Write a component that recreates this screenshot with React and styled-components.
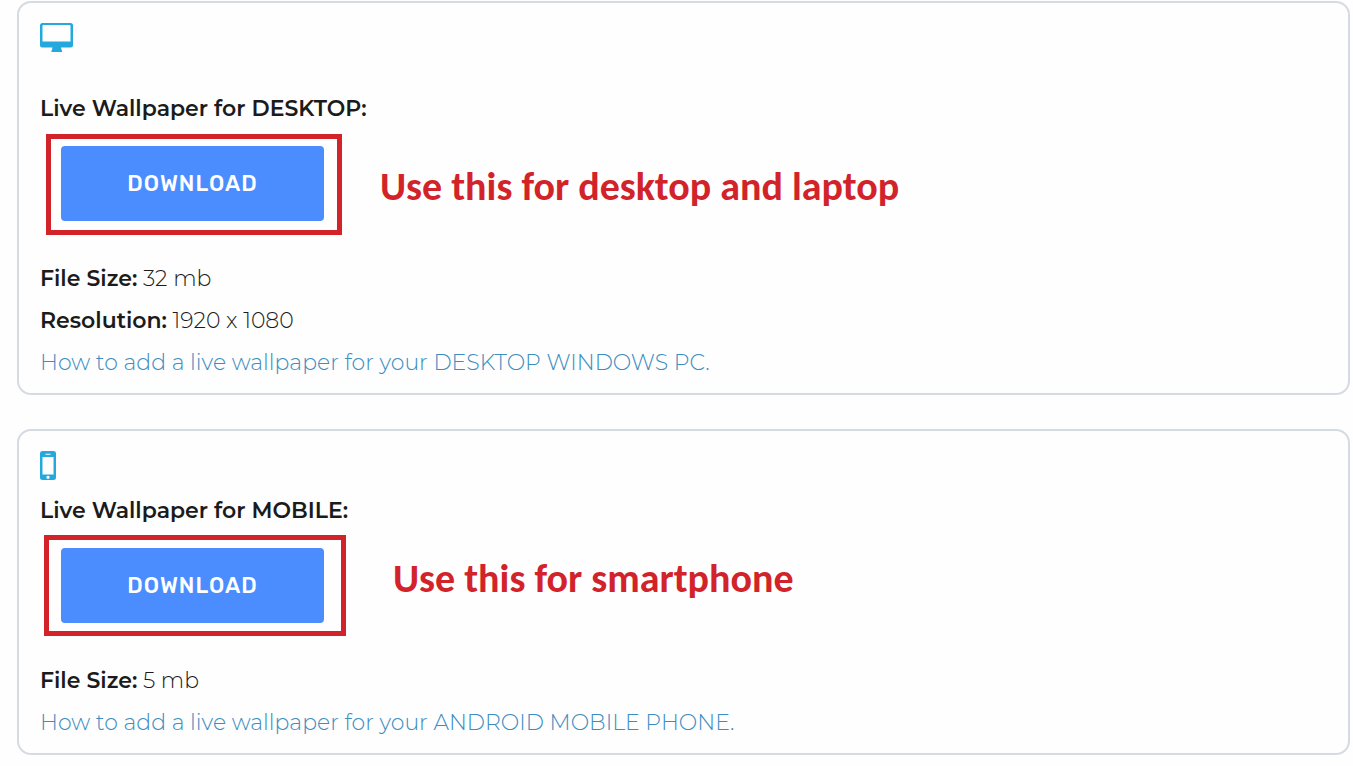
import React from 'react';
import styled, { createGlobalStyle } from 'styled-components';

const GlobalStyle = createGlobalStyle`
    *{
        box-sizing: border-box;
    }
    body{
        margin: 0;
        background-color: #fefefe;
        color: #1b1b1b;
        font-family: Montserrat, Inter, 'Open Sans', sans-serif;
        font-size: 22px;
        font-weight: 300;
        line-height: 42px;
    }
`;

const Page = styled.main`
    display: flex;
    flex-direction: column;
    gap: 34px;
    padding: 1px 3px 10px 17px;
`;

const Card = styled.section`
    display: flex;
    flex-direction: column;
    align-items: flex-start;
    padding: 20px 21px 9px;
    border: 2px solid #d6dae2;
    border-radius: 14px;
`;

const Icon = styled.svg`
    display: block;
    height: 29px;
    margin-bottom: ${props => props.$gap}px;
    fill: #25a9dc;
`;

const Title = styled.h2`
    margin: 0 0 16px;
    font-size: 22px;
    font-weight: 600;
    line-height: 42px;
`;

const Actions = styled.div`
    display: flex;
    align-items: center;
    height: 75px;
    margin: 0 0 37px 21px;
`;

const ButtonWrap = styled.div`
    position: relative;
`;

const Button = styled.button`
    display: block;
    width: 263px;
    height: 75px;
    padding: 0;
    border: 0;
    border-radius: 4px;
    background-color: #4b8dff;
    color: white;
    font-family: Rubik, Roboto, sans-serif;
    font-size: 22px;
    font-weight: 500;
    letter-spacing: 1px;
    text-transform: uppercase;
    cursor: pointer;
`;

/* red frame drawn around the button */
const Highlight = styled.span`
    position: absolute;
    inset: ${props => props.$inset};
    border: 5px solid #d2232a;
    pointer-events: none;
`;

const Note = styled.p`
    margin: ${props => props.$margin};
    color: #d2232a;
    font-family: Calibri, Carlito, 'Open Sans', sans-serif;
    font-size: 40px;
    font-weight: 700;
    line-height: 42px;
`;

const Info = styled.p`
    margin: 0;
    strong{
        font-weight: 600;
    }
`;

const Link = styled.a`
    color: #3c8dc0;
    text-decoration: none;
`;

const DesktopIcon = ({ gap }) => (
    <Icon $gap={gap} width="33" viewBox="0 0 33 29" aria-hidden="true">
        <path fillRule="evenodd" d="M2.500 0h28a2.500 2.500 0 0 1 2.500 2.500v19.500a2.500 2.500 0 0 1-2.500 2.500h-28a2.500 2.500 0 0 1-2.500-2.500v-19.500a2.500 2.500 0 0 1 2.500-2.500zM3.500 2a1 1 0 0 0-1 1v15.500h28v-15.500a1 1 0 0 0-1-1z" />
        <path d="M12.500 24h8.500l.5 3h.5v2h-10.500v-2h.5z" />
    </Icon>
);

const PhoneIcon = ({ gap }) => (
    <Icon $gap={gap} width="16" viewBox="0 0 16 29" aria-hidden="true">
        <path fillRule="evenodd" d="M2.500 0h11a2.500 2.500 0 0 1 2.500 2.500v24a2.500 2.500 0 0 1-2.500 2.500h-11a2.500 2.500 0 0 1-2.500-2.500v-24a2.500 2.500 0 0 1 2.500-2.500zM2.500 6v17.500h11v-17.500zM5.500 2.700v1h5v-1zM8 24.700a1.600 1.600 0 1 0 0 3.200a1.600 1.600 0 0 0 0-3.200z" />
    </Icon>
);

const App = () => {
    return (
        <>
            <GlobalStyle />
            <Page>
                <Card>
                    <DesktopIcon gap={36} />
                    <Title>Live Wallpaper for DESKTOP:</Title>
                    <Actions>
                        <ButtonWrap>
                            <Button type="button">Download</Button>
                            <Highlight $inset="-12px -18px -14px -15px" />
                        </ButtonWrap>
                        <Note $margin="6px 0 0 56px">Use this for desktop and laptop</Note>
                    </Actions>
                    <Info><strong>File Size:</strong> 32 mb</Info>
                    <Info><strong>Resolution:</strong> 1920 x 1080</Info>
                    <Link href="#desktop">How to add a live wallpaper for your DESKTOP WINDOWS PC.</Link>
                </Card>
                <Card>
                    <PhoneIcon gap={10} />
                    <Title>Live Wallpaper for MOBILE:</Title>
                    <Actions>
                        <ButtonWrap>
                            <Button type="button">Download</Button>
                            <Highlight $inset="-13px -22px -13px -17px" />
                        </ButtonWrap>
                        <Note $margin="0 0 14px 69px">Use this for smartphone</Note>
                    </Actions>
                    <Info><strong>File Size:</strong> 5 mb</Info>
                    <Link href="#mobile">How to add a live wallpaper for your ANDROID MOBILE PHONE.</Link>
                </Card>
            </Page>
        </>
    );
}

export default App;
